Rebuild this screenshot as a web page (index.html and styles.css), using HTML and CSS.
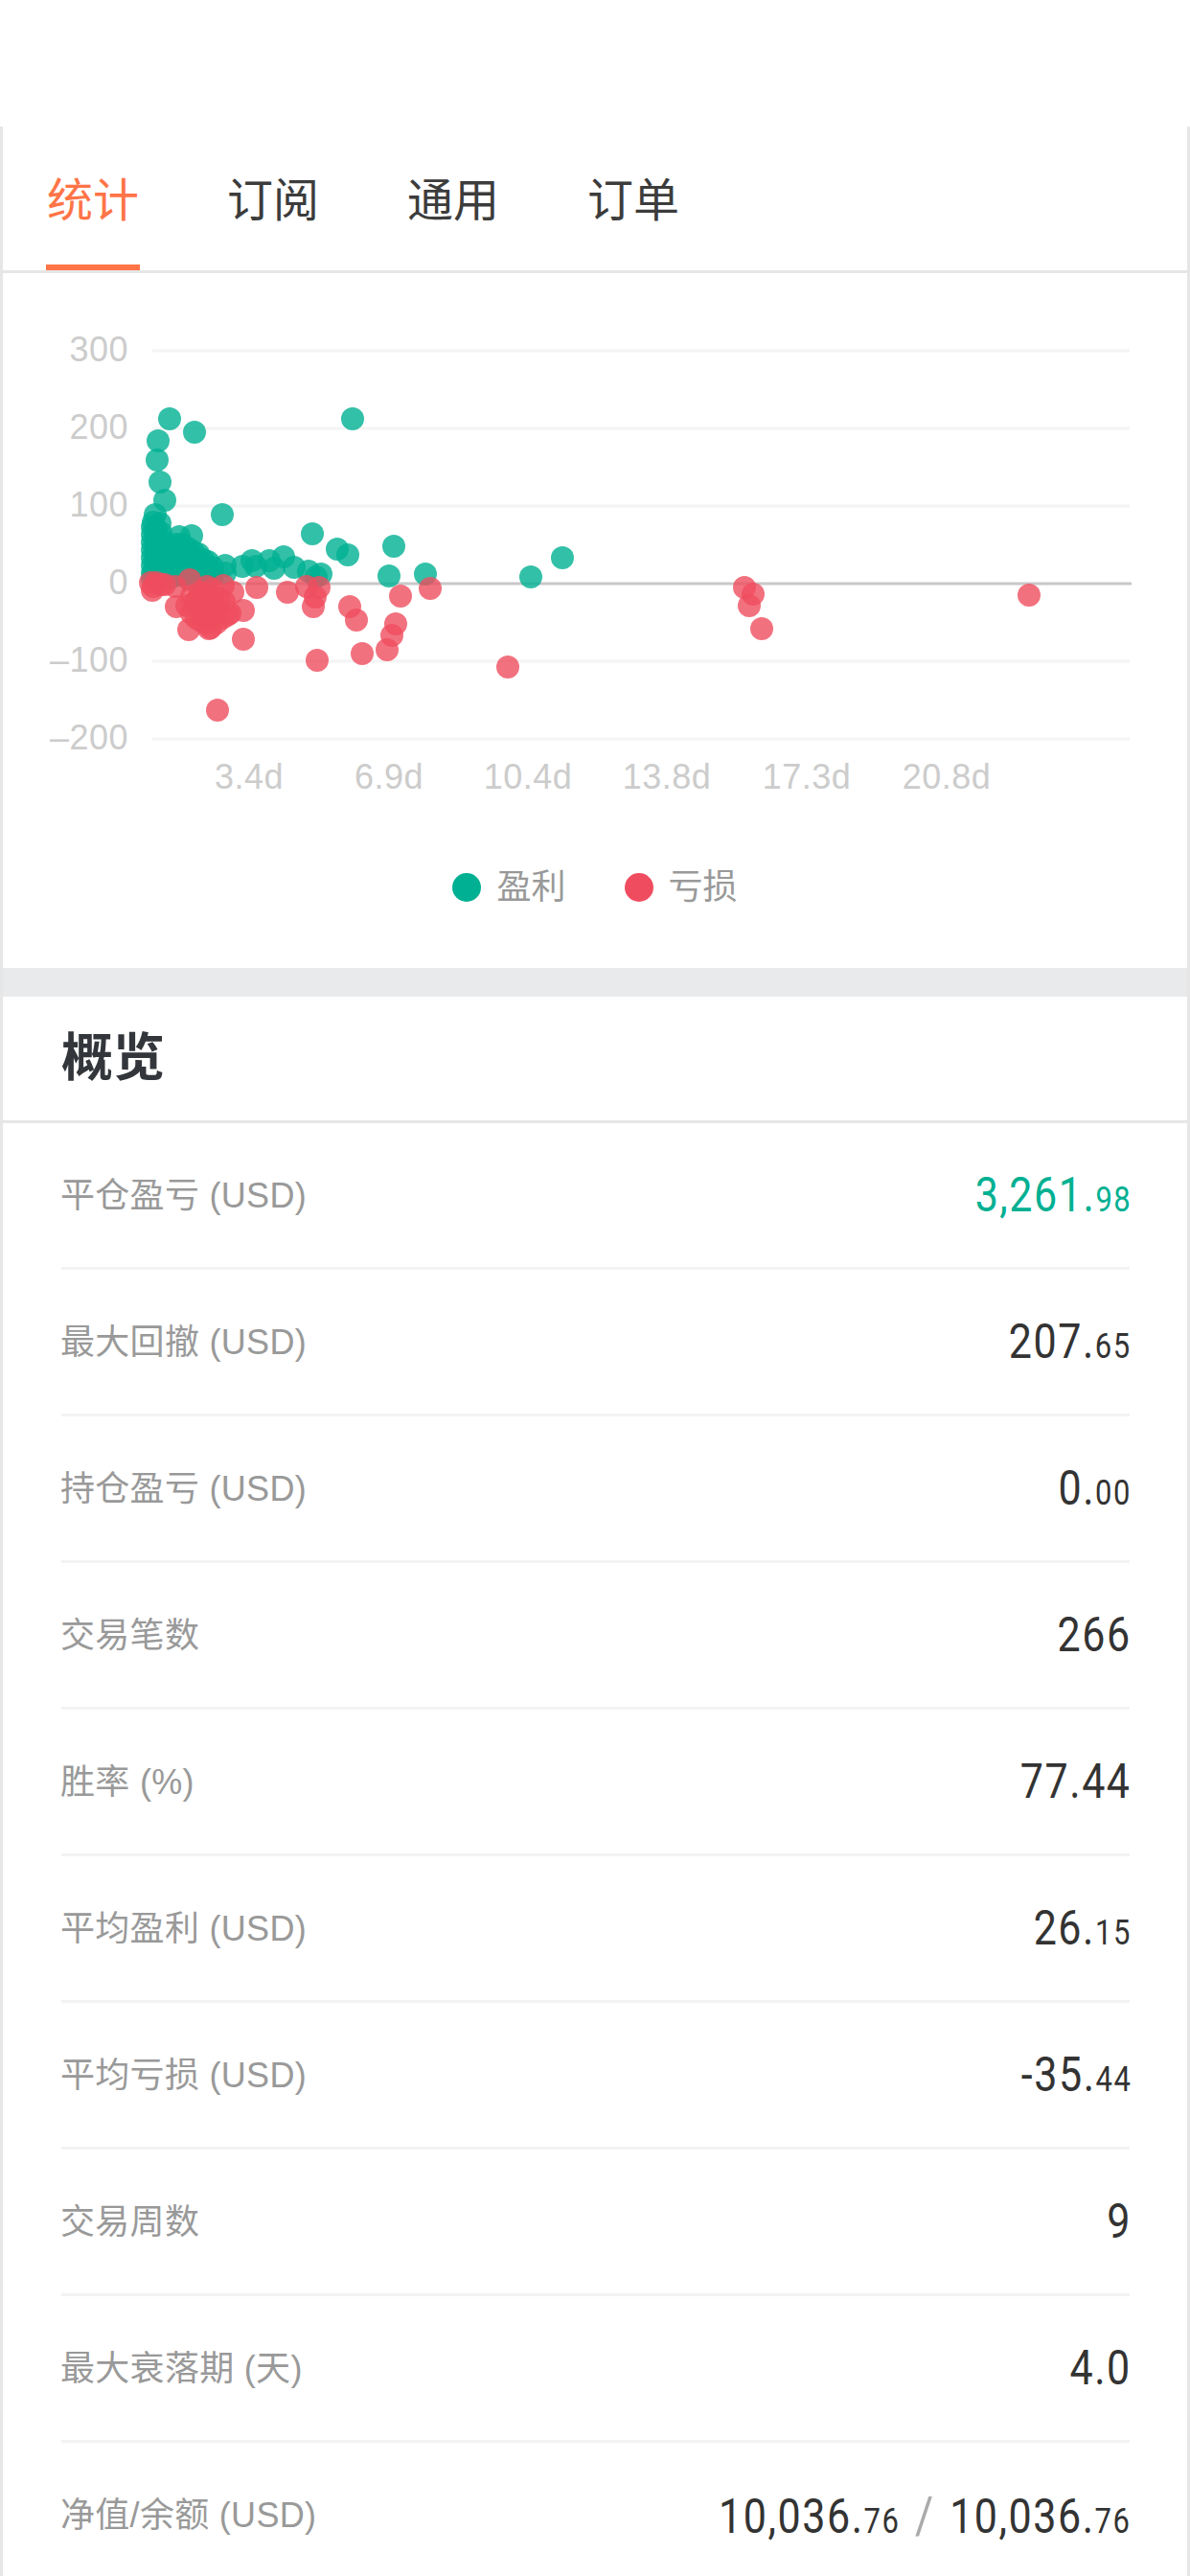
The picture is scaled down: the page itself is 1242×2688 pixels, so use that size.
FILE: index.html
```html
<!DOCTYPE html>
<html lang="en">
<head>
    <meta charset="UTF-8">
    <meta name="viewport" content="width=device-width, initial-scale=1.0">
    <title>统计</title>
    <link rel="stylesheet" href="styles.css">
</head>
<body>
    <div class="page">
        <div class="card">
            <div class="tabs">
                <div class="tab active">统计</div>
                <div class="tab">订阅</div>
                <div class="tab">通用</div>
                <div class="tab">订单</div>
            </div>

            <div class="chart-section">
                <!-- viewBox uses page coordinates so points can be read straight off the screen -->
                <svg class="chart" width="1236" height="595" viewBox="3 285 1236 595">
                    <g class="grid">
                        <line x1="159" x2="1179" y1="366" y2="366"/>
                        <line x1="159" x2="1179" y1="447" y2="447"/>
                        <line x1="159" x2="1179" y1="528" y2="528"/>
                        <line x1="159" x2="1179" y1="690" y2="690"/>
                        <line x1="159" x2="1179" y1="771" y2="771"/>
                    </g>
                    <line class="zero" x1="159" x2="1181" y1="609" y2="609"/>
                    <g class="axis-y">
                        <text x="134" y="377">300</text>
                        <text x="134" y="458">200</text>
                        <text x="134" y="539">100</text>
                        <text x="134" y="620">0</text>
                        <text x="134" y="701">–100</text>
                        <text x="134" y="782">–200</text>
                    </g>
                    <g class="axis-x">
                        <text x="260" y="823">3.4d</text>
                        <text x="406" y="823">6.9d</text>
                        <text x="551" y="823">10.4d</text>
                        <text x="696" y="823">13.8d</text>
                        <text x="842" y="823">17.3d</text>
                        <text x="988" y="823">20.8d</text>
                    </g>
                    <g class="dots-win">
                        <circle cx="177" cy="437"/><circle cx="203" cy="451"/><circle cx="165" cy="460"/><circle cx="164" cy="480"/>
                        <circle cx="167" cy="503"/><circle cx="172" cy="522"/><circle cx="368" cy="437"/><circle cx="232" cy="537"/>
                        <circle cx="162" cy="537"/><circle cx="160" cy="545"/><circle cx="167" cy="546"/><circle cx="326" cy="557"/>
                        <circle cx="352" cy="573"/><circle cx="363" cy="579"/><circle cx="411" cy="570"/><circle cx="406" cy="601"/>
                        <circle cx="444" cy="599"/><circle cx="187" cy="560"/><circle cx="200" cy="559"/><circle cx="235" cy="590"/>
                        <circle cx="235" cy="598"/><circle cx="253" cy="591"/><circle cx="263" cy="585"/><circle cx="267" cy="591"/>
                        <circle cx="281" cy="585"/><circle cx="286" cy="593"/><circle cx="296" cy="581"/><circle cx="307" cy="592"/>
                        <circle cx="322" cy="596"/><circle cx="335" cy="599"/><circle cx="330" cy="602"/><circle cx="587" cy="582"/>
                        <circle cx="554" cy="602"/>
                        <circle cx="159" cy="550"/><circle cx="159" cy="558"/><circle cx="159" cy="566"/><circle cx="159" cy="574"/>
                        <circle cx="159" cy="582"/><circle cx="159" cy="590"/><circle cx="159" cy="598"/><circle cx="159" cy="604"/>
                        <circle cx="163" cy="552"/><circle cx="163" cy="560"/><circle cx="163" cy="568"/><circle cx="163" cy="576"/>
                        <circle cx="163" cy="584"/><circle cx="163" cy="592"/><circle cx="163" cy="600"/><circle cx="163" cy="606"/>
                        <circle cx="168" cy="556"/><circle cx="168" cy="564"/><circle cx="168" cy="572"/><circle cx="168" cy="580"/>
                        <circle cx="168" cy="588"/><circle cx="168" cy="596"/><circle cx="168" cy="603"/><circle cx="173" cy="566"/>
                        <circle cx="173" cy="574"/><circle cx="173" cy="582"/><circle cx="173" cy="590"/><circle cx="173" cy="598"/>
                        <circle cx="178" cy="572"/><circle cx="178" cy="580"/><circle cx="178" cy="588"/><circle cx="178" cy="596"/>
                        <circle cx="178" cy="603"/><circle cx="184" cy="568"/><circle cx="184" cy="576"/><circle cx="184" cy="584"/>
                        <circle cx="184" cy="592"/><circle cx="184" cy="600"/><circle cx="190" cy="568"/><circle cx="190" cy="576"/>
                        <circle cx="190" cy="584"/><circle cx="190" cy="592"/><circle cx="190" cy="600"/><circle cx="196" cy="572"/>
                        <circle cx="196" cy="580"/><circle cx="196" cy="588"/><circle cx="196" cy="596"/><circle cx="196" cy="603"/>
                        <circle cx="202" cy="576"/><circle cx="202" cy="584"/><circle cx="202" cy="592"/><circle cx="202" cy="600"/>
                        <circle cx="207" cy="578"/><circle cx="207" cy="586"/><circle cx="207" cy="594"/><circle cx="207" cy="602"/>
                        <circle cx="212" cy="584"/><circle cx="212" cy="592"/><circle cx="212" cy="600"/><circle cx="217" cy="586"/>
                        <circle cx="217" cy="594"/><circle cx="217" cy="602"/><circle cx="222" cy="592"/><circle cx="222" cy="600"/>
                    </g>
                    <g class="dots-loss">
                        <circle cx="159" cy="616"/><circle cx="163" cy="608"/><circle cx="168" cy="610"/><circle cx="157" cy="608"/>
                        <circle cx="172" cy="610"/><circle cx="160" cy="612"/>
                        <circle cx="184" cy="633"/><circle cx="197" cy="657"/><circle cx="198" cy="605"/><circle cx="183" cy="612"/>
                        <circle cx="233" cy="611"/><circle cx="243" cy="618"/><circle cx="268" cy="613"/><circle cx="300" cy="618"/>
                        <circle cx="320" cy="612"/><circle cx="333" cy="613"/><circle cx="329" cy="623"/><circle cx="327" cy="633"/>
                        <circle cx="254" cy="637"/><circle cx="240" cy="640"/><circle cx="237" cy="642"/><circle cx="254" cy="667"/>
                        <circle cx="227" cy="741"/><circle cx="331" cy="689"/><circle cx="365" cy="633"/><circle cx="372" cy="647"/>
                        <circle cx="378" cy="682"/><circle cx="404" cy="678"/><circle cx="409" cy="663"/><circle cx="413" cy="651"/>
                        <circle cx="418" cy="622"/><circle cx="449" cy="614"/><circle cx="530" cy="696"/><circle cx="777" cy="613"/>
                        <circle cx="786" cy="620"/><circle cx="782" cy="632"/><circle cx="795" cy="656"/><circle cx="1074" cy="621"/>
                        <circle cx="207" cy="625"/><circle cx="212" cy="620"/><circle cx="217" cy="625"/><circle cx="222" cy="630"/>
                        <circle cx="207" cy="635"/><circle cx="212" cy="640"/><circle cx="218" cy="640"/><circle cx="224" cy="640"/>
                        <circle cx="214" cy="650"/><circle cx="220" cy="655"/><circle cx="226" cy="650"/><circle cx="232" cy="645"/>
                        <circle cx="210" cy="648"/><circle cx="222" cy="615"/><circle cx="216" cy="612"/><circle cx="228" cy="625"/>
                        <circle cx="204" cy="628"/><circle cx="200" cy="622"/><circle cx="214" cy="632"/><circle cx="220" cy="635"/>
                        <circle cx="226" cy="634"/><circle cx="205" cy="645"/><circle cx="218" cy="656"/><circle cx="209" cy="618"/>
                        <circle cx="195" cy="632"/><circle cx="200" cy="640"/><circle cx="234" cy="628"/>
                    </g>
                </svg>
                <div class="legend">
                    <div class="legend-item"><span class="legend-dot win"></span>盈利</div>
                    <div class="legend-item"><span class="legend-dot loss"></span>亏损</div>
                </div>
            </div>

            <div class="section-gap"></div>

            <h2 class="section-title">概览</h2>

            <div class="stats">
                <div class="stat-row"><span class="stat-label">平仓盈亏 (USD)</span><span class="stat-value up">3,261.<small>98</small></span></div>
                <div class="stat-row"><span class="stat-label">最大回撤 (USD)</span><span class="stat-value">207.<small>65</small></span></div>
                <div class="stat-row"><span class="stat-label">持仓盈亏 (USD)</span><span class="stat-value">0.<small>00</small></span></div>
                <div class="stat-row"><span class="stat-label">交易笔数</span><span class="stat-value">266</span></div>
                <div class="stat-row"><span class="stat-label">胜率 (%)</span><span class="stat-value">77.44</span></div>
                <div class="stat-row"><span class="stat-label">平均盈利 (USD)</span><span class="stat-value">26.<small>15</small></span></div>
                <div class="stat-row"><span class="stat-label">平均亏损 (USD)</span><span class="stat-value">-35.<small>44</small></span></div>
                <div class="stat-row"><span class="stat-label">交易周数</span><span class="stat-value">9</span></div>
                <div class="stat-row"><span class="stat-label">最大衰落期 (天)</span><span class="stat-value">4.0</span></div>
                <div class="stat-row"><span class="stat-label">净值/余额 (USD)</span><span class="stat-value">10,036.<small>76</small><i class="slash">/</i>10,036.<small>76</small></span></div>
            </div>
        </div>
    </div>
</body>
</html>
```

FILE: styles.css
```css
body {
    margin: 0;
    background: #fff;
    font-family: "Liberation Sans", "Noto Sans CJK SC", sans-serif;
}
.page {
    height: 2688px;
    overflow: hidden;
    padding-top: 132px;
    box-sizing: border-box;
}
.card {
    border-left: 3px solid #e6e6e6;
    border-right: 3px solid #e6e6e6;
}
.tabs {
    display: flex;
    gap: 90px;
    height: 150px;
    padding-left: 45px;
    border-bottom: 3px solid #e6e6e6;
}
.tab {
    width: 98px;
    height: 150px;
    font-size: 48px;
    line-height: 156px;
    text-align: center;
    color: #3c3c3c;
}
.tab.active {
    color: #ff7447;
    height: 144px;
    border-bottom: 6px solid #ff7447;
}
.chart {
    display: block;
}
.grid line {
    stroke: #f4f4f4;
    stroke-width: 3;
}
.zero {
    stroke: #c8c8c8;
    stroke-width: 3;
}
.axis-y text,
.axis-x text {
    font-size: 36px;
    letter-spacing: 0.5px;
    fill: #cccccc;
}
.axis-y text {
    text-anchor: end;
}
.axis-x text {
    text-anchor: middle;
}
.dots-win circle,
.dots-loss circle {
    r: 12px;
    fill-opacity: 0.8;
}
.dots-win circle {
    fill: #00b092;
}
.dots-loss circle {
    fill: #ef4d5f;
}
.legend {
    display: flex;
    justify-content: center;
    gap: 61px;
    padding: 28px 0 66px;
    height: 36px;
    font-size: 36px;
    line-height: 36px;
    color: #999;
}
.legend-item {
    display: flex;
    align-items: center;
    gap: 16px;
}
.legend-dot {
    width: 30px;
    height: 30px;
    border-radius: 50%;
}
.legend-dot.win {
    background: #00b092;
}
.legend-dot.loss {
    background: #ef4d5f;
}
.section-gap {
    height: 30px;
    background: #e9eaec;
}
.section-title {
    margin: 0;
    height: 129px;
    padding-left: 61px;
    border-bottom: 3px solid #e6e6e6;
    font-size: 54px;
    line-height: 129px;
    font-weight: bold;
    color: #33363b;
}
.stats {
    padding: 0 60px 0 61px;
}
.stat-row {
    display: flex;
    justify-content: space-between;
    align-items: center;
    height: 150px;
    border-bottom: 3px solid #f3f3f3;
}
.stat-label {
    font-size: 36px;
    letter-spacing: 0.3px;
    color: #999;
    padding-bottom: 6px;
    margin-left: -1px;
}
/* no DIN here: Roboto squeezed sideways comes closest to the narrow digits */
.stat-value {
    font-family: Roboto, sans-serif;
    font-size: 50px;
    letter-spacing: 1.8px;
    color: #333;
    white-space: nowrap;
    margin-right: -2px;
    transform: scaleX(0.86);
    transform-origin: right center;
}
.stat-value small {
    font-size: 36px;
    letter-spacing: 1.8px;
}
.stat-value.up {
    color: #00b092;
}
.slash {
    font-style: normal;
    font-size: 54px;
    color: #aaa;
    margin: 0 18px;
}
```
